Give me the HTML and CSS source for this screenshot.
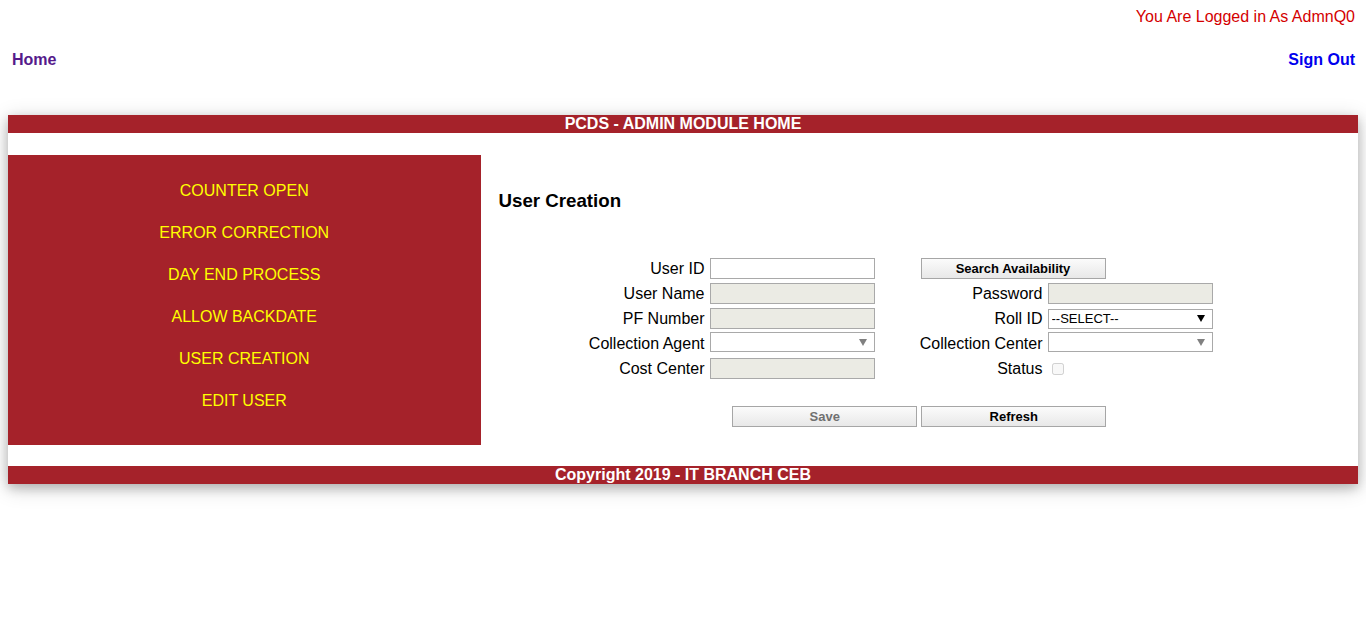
FILE: index.html
```html
<!DOCTYPE html>
<html>
<head>
<meta charset="utf-8">
<title>PCDS - Admin Module</title>
<link rel="stylesheet" href="styles.css">
</head>
<body>
<div class="login-info">You Are Logged in As AdmnQ0</div>
<div class="nav">
  <a class="nav-home" href="#">Home</a>
  <a class="nav-signout" href="#">Sign Out</a>
</div>
<div class="card">
  <div class="bar">PCDS - ADMIN MODULE HOME</div>
  <div class="main">
    <div class="side">
      <a class="side-item" href="#">COUNTER OPEN</a>
      <a class="side-item" href="#">ERROR CORRECTION</a>
      <a class="side-item" href="#">DAY END PROCESS</a>
      <a class="side-item" href="#">ALLOW BACKDATE</a>
      <a class="side-item" href="#">USER CREATION</a>
      <a class="side-item" href="#">EDIT USER</a>
    </div>
    <div class="content">
      <h3 class="title">User Creation</h3>
      <div class="form">
        <label class="lbl">User ID</label>
        <input class="inp" type="text">
        <div class="search-cell"><button class="btn">Search Availability</button></div>

        <label class="lbl">User Name</label>
        <input class="inp" type="text" disabled>
        <label class="lbl">Password</label>
        <input class="inp" type="password" disabled>

        <label class="lbl">PF Number</label>
        <input class="inp" type="text" disabled>
        <label class="lbl">Roll ID</label>
        <select class="sel sel-active"><option>--SELECT--</option></select>

        <label class="lbl">Collection Agent</label>
        <select class="sel sel-empty"><option></option></select>
        <label class="lbl">Collection Center</label>
        <select class="sel sel-empty"><option></option></select>

        <label class="lbl">Cost Center</label>
        <input class="inp" type="text" disabled>
        <label class="lbl">Status</label>
        <div class="chk-cell"><input class="chk" type="checkbox" disabled></div>
      </div>
      <div class="actions">
        <button class="btn btn-disabled" disabled>Save</button>
        <button class="btn">Refresh</button>
      </div>
    </div>
  </div>
  <div class="bar">Copyright 2019 - IT BRANCH CEB</div>
</div>
</body>
</html>
```

FILE: styles.css
```css
html {
  margin: 0;
  padding: 0;
  background: #ffffff;
}
body {
  margin: 0;
  padding: 8px 8px 60px;
  background: #ffffff;
  font-family: "Liberation Sans", Arial, sans-serif;
  font-size: 16px;
  color: #000;
}
.login-info {
  text-align: right;
  color: #d40000;
  line-height: 18px;
  padding-right: 3px;
}
.nav {
  display: flex;
  justify-content: space-between;
  margin-top: 25px;
  line-height: 18px;
  padding: 0 3px 0 4px;
}
.nav a {
  font-weight: bold;
  text-decoration: none;
}
.nav-home { color: #551a8b; }
.nav-signout { color: #0000ee; }

.card {
  margin-top: 46px;
  background: #fff;
  box-shadow: 0 4px 10px 0 rgba(0,0,0,0.2), 0 4px 20px 0 rgba(0,0,0,0.19);
}
.bar {
  background: #a5222a;
  color: #fff;
  font-weight: bold;
  text-align: center;
  height: 18px;
  line-height: 18px;
}
.main {
  display: flex;
  padding: 22px 0 21px;
  background: #fff;
}
.side {
  width: 35%;
  background: #a5222a;
  padding: 14px 0 24px;
  display: flex;
  flex-direction: column;
}
.side-item {
  display: block;
  height: 42px;
  line-height: 44px;
  text-align: center;
  color: #ffff00;
  font-family: "Liberation Sans", Arial, sans-serif;
  font-size: 16px;
  text-decoration: none;
}
.content {
  flex: 1;
}
.title {
  margin: 35px 0 0 18px;
  font-size: 1.17em;
  line-height: 21px;
  font-weight: bold;
}
.form {
  margin-top: 47px;
  display: grid;
  grid-template-columns: 229px 165px 173px 165px;
  grid-auto-rows: 21px;
  row-gap: 4px;
  align-items: center;
}
.lbl {
  text-align: right;
  padding-right: 5px;
  line-height: 18px;
}
.inp {
  box-sizing: border-box;
  width: 165px;
  height: 21px;
  margin: 0;
  border: 1px solid #a9a9a9;
  background: #fff;
  padding: 1px 2px;
  font-size: 13px;
}
.inp:disabled {
  background: #ebebe4;
}
.sel {
  box-sizing: border-box;
  width: 165px;
  height: 20px;
  margin: 0;
  border: 1px solid #a9a9a9;
  background-color: #fff;
  appearance: none;
  -webkit-appearance: none;
  font-family: "Liberation Sans", Arial, sans-serif;
  font-size: 13px;
  padding: 0 0 0 3px;
  color: #000;
  background-repeat: no-repeat;
  background-position: right 7px center;
  background-size: 8px 7px;
}
.sel-active {
  background-image: url("data:image/svg+xml,%3Csvg xmlns='http://www.w3.org/2000/svg' width='8' height='7'%3E%3Cpath d='M0 0H8L4 7Z' fill='%23000'/%3E%3C/svg%3E");
}
.sel-empty {
  align-self: start;
  margin-top: -1px;
  background-image: url("data:image/svg+xml,%3Csvg xmlns='http://www.w3.org/2000/svg' width='8' height='7'%3E%3Cpath d='M0 0H8L4 7Z' fill='%23808080'/%3E%3C/svg%3E");
}
.search-cell {
  grid-column: 3 / 5;
  padding-left: 46px;
}
.chk-cell {
  display: flex;
  align-items: center;
  padding-left: 4px;
}
.chk {
  width: 12px;
  height: 12px;
  margin: 0;
}
.btn {
  box-sizing: border-box;
  width: 185px;
  height: 21px;
  margin: 0;
  padding: 0;
  border: 1px solid #a6a6a6;
  border-radius: 0;
  background: linear-gradient(#fbfbfb, #e8e8e8);
  font-family: "Liberation Sans", Arial, sans-serif;
  font-size: 13px;
  font-weight: bold;
  color: #000;
}
.btn-disabled {
  color: #707070;
}
.actions {
  margin-top: 27px;
  display: flex;
  justify-content: center;
  gap: 4px;
}
```
